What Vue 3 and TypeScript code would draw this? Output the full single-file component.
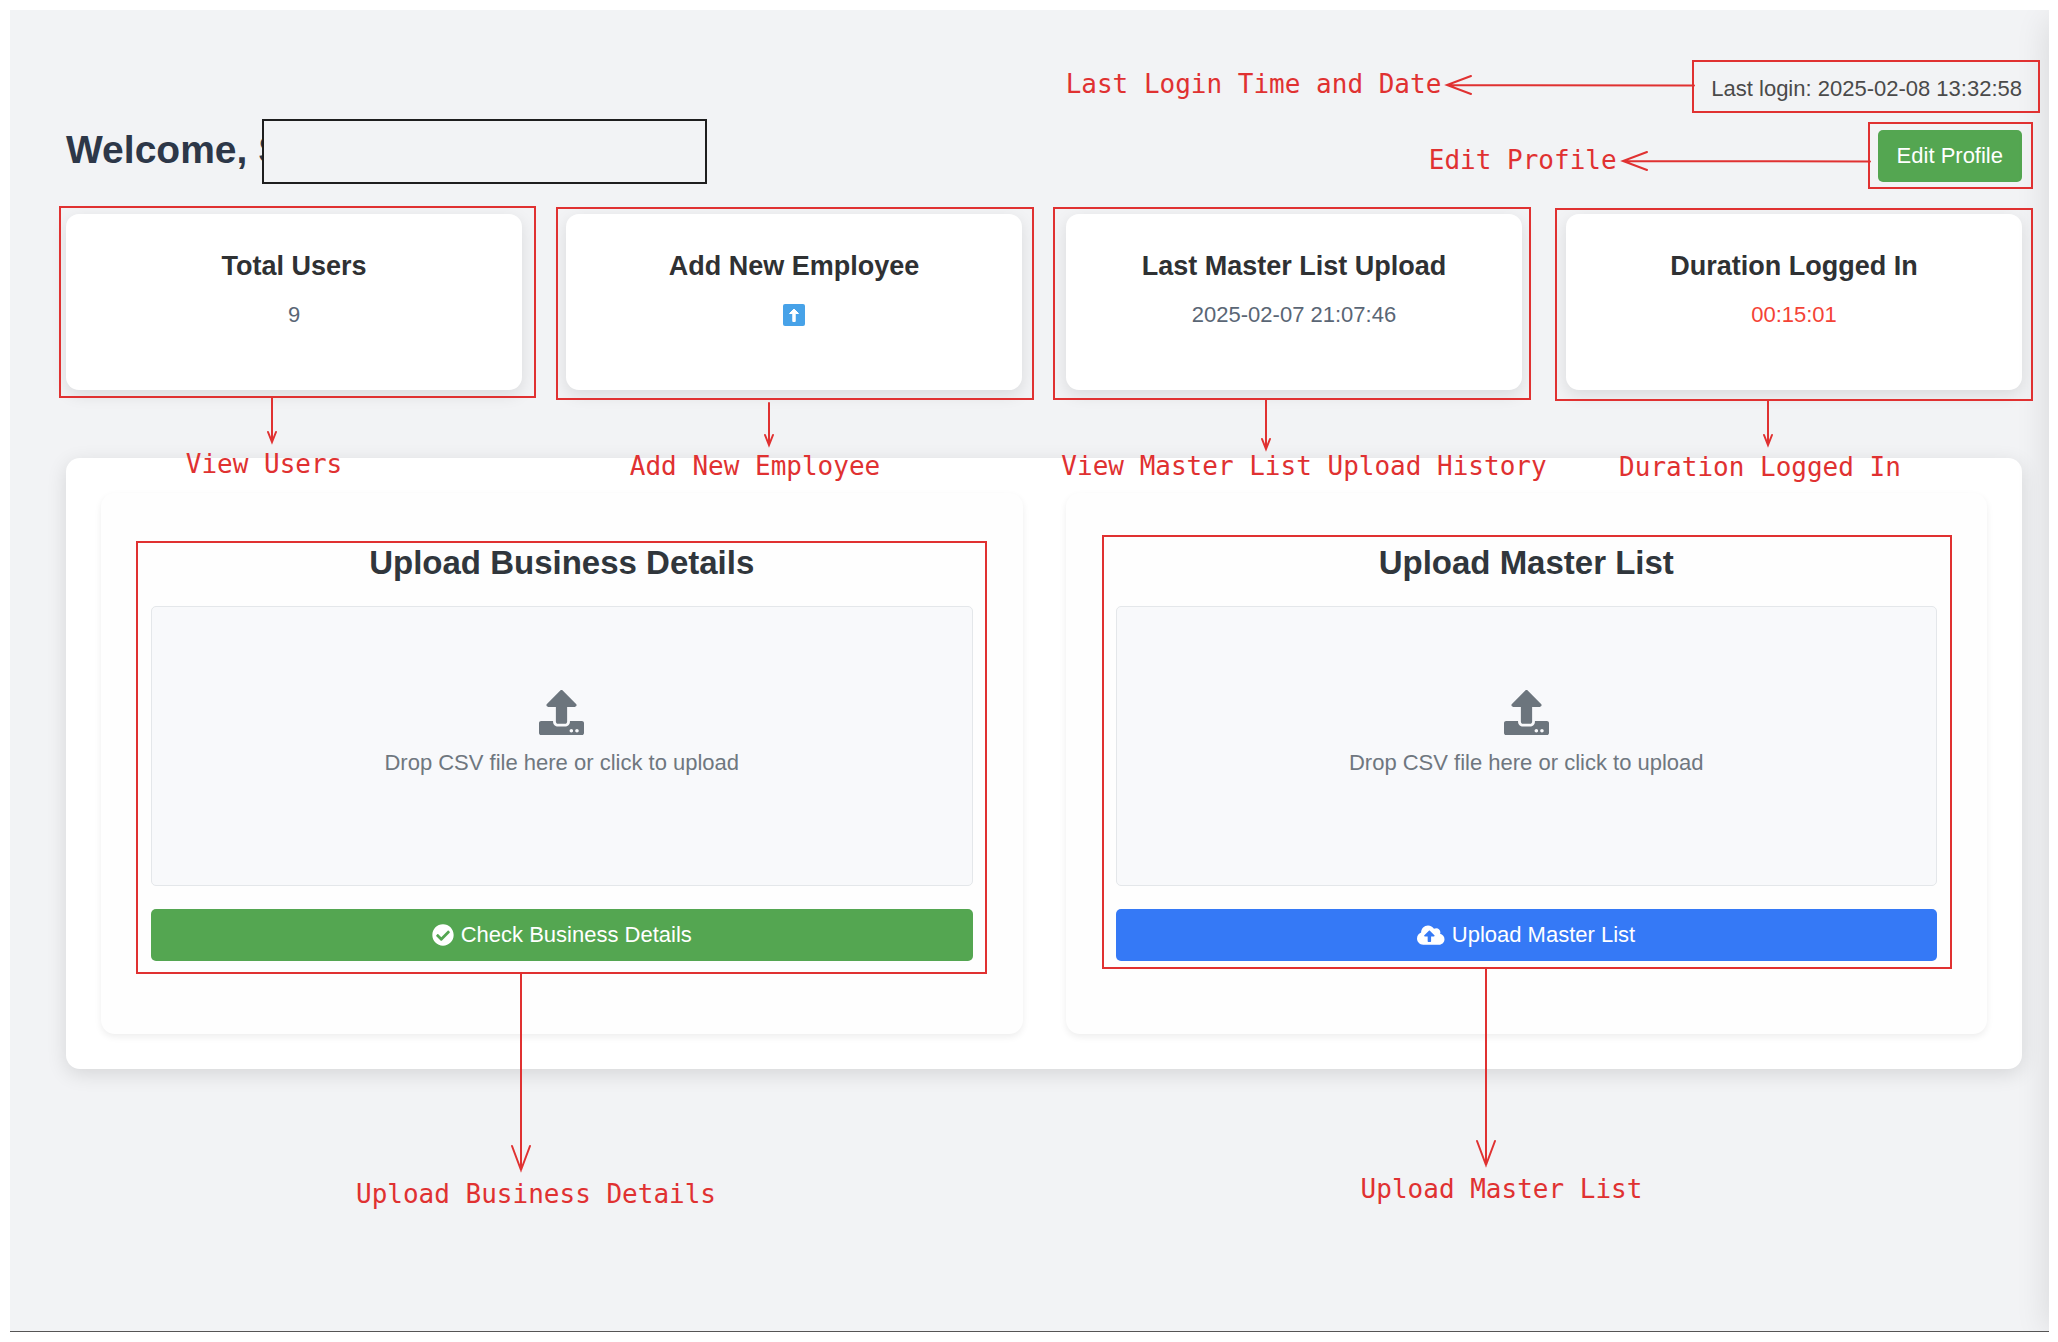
<script setup lang="ts">
interface Inset {
  top: number
  right: number
  bottom: number
  left: number
}

interface StatCard {
  title: string
  kind: 'text' | 'link' | 'timer'
  value: string
  frame: Inset
  note: string
  noteCenter: number
  arrowGap: number
  arrowLength: number
}

interface UploadCard {
  id: string
  title: string
  action: string
  tone: 'green' | 'blue'
  iconBox: string
  icon: string
  frame: Inset
  note: string
  noteCenter: number
}

const stats: StatCard[] = [
  {
    title: 'Total Users', kind: 'text', value: '9',
    frame: { top: -8, right: -14, bottom: -8, left: -7 },
    note: 'View Users', noteCenter: 203, arrowGap: 0, arrowLength: 45,
  },
  {
    title: 'Add New Employee', kind: 'link', value: '',
    frame: { top: -7, right: -12, bottom: -10, left: -10 },
    note: 'Add New Employee', noteCenter: 197, arrowGap: 4, arrowLength: 42,
  },
  {
    title: 'Last Master List Upload', kind: 'text', value: '2025-02-07 21:07:46',
    frame: { top: -7, right: -9, bottom: -10, left: -13 },
    note: 'View Master List Upload History', noteCenter: 249, arrowGap: 0, arrowLength: 50,
  },
  {
    title: 'Duration Logged In', kind: 'timer', value: '00:15:01',
    frame: { top: -6, right: -11, bottom: -11, left: -11 },
    note: 'Duration Logged In', noteCenter: 203, arrowGap: 0, arrowLength: 45,
  },
]

const uploads: UploadCard[] = [
  {
    id: 'business-file',
    title: 'Upload Business Details',
    action: 'Check Business Details',
    tone: 'green',
    iconBox: '0 0 512 512',
    icon: 'M504 256c0 136.967-111.033 248-248 248S8 392.967 8 256 119.033 8 256 8s248 111.033 248 248zM227.314 387.314l184-184c6.248-6.248 6.248-16.379 0-22.627l-22.627-22.627c-6.248-6.249-16.379-6.249-22.628 0L216 308.118l-70.059-70.059c-6.248-6.248-16.379-6.248-22.628 0l-22.627 22.627c-6.248 6.248-6.248 16.379 0 22.627l104 104c6.249 6.249 16.379 6.249 22.628.001z',
    frame: { top: 48, right: 36, bottom: 60, left: 35 },
    note: 'Upload Business Details',
    noteCenter: 398,
  },
  {
    id: 'master-file',
    title: 'Upload Master List',
    action: 'Upload Master List',
    tone: 'blue',
    iconBox: '0 0 640 512',
    icon: 'M537.6 226.6c4.1-10.7 6.4-22.4 6.4-34.6 0-53-43-96-96-96-19.7 0-38.1 6-53.3 16.2C367 64.2 315.3 32 256 32c-88.4 0-160 71.6-160 160 0 2.7.1 5.4.2 8.1C40.2 219.8 0 273.2 0 336c0 79.5 64.5 144 144 144h368c70.7 0 128-57.3 128-128 0-61.9-44-113.6-102.4-125.4zM393.4 288H328v112c0 8.8-7.2 16-16 16h-48c-8.8 0-16-7.2-16-16V288h-65.4c-14.3 0-21.4-17.2-11.3-27.4l105.4-105.4c6.2-6.2 16.4-6.2 22.6 0l105.4 105.4c10.1 10.2 2.9 27.4-11.3 27.4z',
    frame: { top: 42, right: 35, bottom: 65, left: 36 },
    note: 'Upload Master List',
    noteCenter: 398,
  },
]

function frameStyle(f: Inset) {
  return { inset: `${f.top}px ${f.right}px ${f.bottom}px ${f.left}px` }
}

// Shaft plus an open head; `w` is half the head's width and `h` its height.
function arrowDown(gap: number, length: number, w: number, h: number) {
  const tip = gap + length
  return `M10 ${gap}V${tip}M${10 - w} ${tip - h}L10 ${tip}L${10 + w} ${tip - h}`
}
</script>

<template>
  <main class="page">
    <header class="header">
      <h1 class="welcome">Welcome, S<span class="redaction"></span></h1>
      <div class="account">
        <div class="login annotated">
          Last login: 2025-02-08 13:32:58
          <div class="frame frame-login">
            <div class="side-note">
              <span class="note">Last Login Time and Date</span>
              <svg class="arrow-left" viewBox="0 0 245 20"><path d="M247 10.500L0 10M24 1L0 10L24 19" /></svg>
            </div>
          </div>
        </div>
        <div class="annotated">
          <button type="button" class="btn green edit">Edit Profile</button>
          <div class="frame frame-edit">
            <div class="side-note">
              <span class="note">Edit Profile</span>
              <svg class="arrow-left" viewBox="0 0 245 20"><path d="M247 10.500L0 10M24 1L0 10L24 19" /></svg>
            </div>
          </div>
        </div>
      </div>
    </header>

    <section class="stats">
      <article v-for="s in stats" :key="s.title" class="stat annotated">
        <h2 class="stat-title">{{ s.title }}</h2>
        <p class="stat-value" :class="{ timer: s.kind === 'timer' }">
          <a v-if="s.kind === 'link'" href="#" class="add" aria-label="Add new employee">
            <svg viewBox="0 0 22 22">
              <rect width="22" height="22" rx="2" fill="#47a2e8" />
              <path d="M11 5L15.500 9.500H12.200V17.500H9.800V9.500H6.500Z" fill="#fff" stroke="#fff" stroke-linejoin="round" />
            </svg>
          </a>
          <template v-else>{{ s.value }}</template>
        </p>
        <div class="frame" :style="frameStyle(s.frame)">
          <svg class="arrow-down"><path :d="arrowDown(s.arrowGap, s.arrowLength, 4, 10)" /></svg>
          <span class="note below" :style="{ left: `${s.noteCenter}px` }">{{ s.note }}</span>
        </div>
      </article>
    </section>

    <section class="panel">
      <form v-for="u in uploads" :key="u.id" class="upload annotated" @submit.prevent>
        <h2 class="upload-title">{{ u.title }}</h2>
        <label class="drop" :for="u.id">
          <svg class="drop-icon" viewBox="0 0 512 512">
            <path d="M296 384h-80c-13.300 0-24-10.700-24-24V192h-87.700c-17.800 0-26.700-21.500-14.100-34.100L242.300 5.700c7.500-7.500 19.800-7.500 27.300 0l152.200 152.200c12.600 12.600 3.700 34.100-14.100 34.100H320v168c0 13.300-10.700 24-24 24zm216-8v112c0 13.300-10.700 24-24 24H24c-13.300 0-24-10.700-24-24V376c0-13.300 10.700-24 24-24h136v8c0 30.900 25.100 56 56 56h80c30.900 0 56-25.100 56-56v-8h136c13.300 0 24 10.700 24 24zm-124 88c0-11-9-20-20-20s-20 9-20 20 9 20 20 20 20-9 20-20zm64 0c0-11-9-20-20-20s-20 9-20 20 9 20 20 20 20-9 20-20z" />
          </svg>
          <span class="drop-text">Drop CSV file here or click to upload</span>
          <input :id="u.id" class="file" type="file" accept=".csv" />
        </label>
        <button type="submit" class="btn wide" :class="u.tone">
          <svg class="btn-icon" :viewBox="u.iconBox"><path :d="u.icon" /></svg>
          {{ u.action }}
        </button>
        <div class="frame" :style="frameStyle(u.frame)">
          <svg class="arrow-down"><path :d="arrowDown(0, 197, 9, 24)" /></svg>
          <span class="note far" :style="{ left: `${u.noteCenter}px` }">{{ u.note }}</span>
        </div>
      </form>
    </section>
  </main>
</template>

<style>
body {
  background: #fff;
}
</style>

<style scoped>
.page {
  position: relative;
  box-sizing: border-box;
  min-height: calc(100vh - 20px);
  margin: 10px 9px 10px 10px;
  padding: 62px 27px 40px 56px;
  overflow: hidden;
  background: #f2f3f5;
  border-bottom: 1px solid #555;
  font-family: "Liberation Sans", Arial, sans-serif;
  font-size: 22px;
  line-height: 32px;
}

/* Shadow cast by the window's right edge */
.page::after {
  content: "";
  position: absolute;
  top: 10px;
  bottom: 0;
  left: 100%;
  width: 40px;
  box-shadow: 0 0 34px rgba(0, 0, 0, 0.12);
}

h1,
h2,
p {
  margin: 0;
}

.header {
  display: flex;
  justify-content: space-between;
  align-items: flex-end;
  margin-bottom: 32px;
}

.welcome {
  position: relative;
  color: #2d3748;
  font-size: 39px;
  line-height: 64px;
}

.redaction {
  position: absolute;
  top: 1px;
  left: 196px;
  box-sizing: border-box;
  width: 445px;
  height: 65px;
  background: #f2f3f5;
  border: 2px solid #1e1e1e;
}

.account {
  display: flex;
  flex-direction: column;
  align-items: flex-end;
  gap: 24px;
}

.login {
  color: #4a4a4a;
  line-height: 34px;
}

.annotated {
  position: relative;
}

.btn {
  display: flex;
  align-items: center;
  justify-content: center;
  gap: 7px;
  height: 52px;
  padding: 0 19px;
  border: 0;
  border-radius: 5px;
  color: #fff;
  font: inherit;
  cursor: pointer;
}

.green {
  background: #54a651;
}

.blue {
  background: #3579f6;
}

.wide {
  width: 100%;
}

.btn-icon {
  height: 22px;
  fill: currentColor;
}

.stats {
  display: grid;
  grid-template-columns: repeat(4, 1fr);
  gap: 44px;
  margin-bottom: 68px;
}

.stat {
  box-sizing: border-box;
  min-height: 176px;
  padding: 36px 20px;
  background: #fff;
  border-radius: 13px;
  box-shadow: 0 5px 16px rgba(0, 0, 0, 0.1);
  text-align: center;
}

.stat-title {
  margin-bottom: 17px;
  color: #2f3133;
  font-size: 27px;
  line-height: 32px;
}

.stat-value {
  color: #5a6675;
}

.timer {
  color: #f44336;
}

.add {
  display: flex;
  justify-content: center;
  align-items: center;
  height: 32px;
}

.add svg {
  width: 22px;
  height: 22px;
}

.panel {
  display: grid;
  grid-template-columns: 1fr 1fr;
  gap: 43px;
  padding: 35px;
  background: #fff;
  border-radius: 14px;
  box-shadow: 0 5px 20px rgba(0, 0, 0, 0.12);
}

.upload {
  padding: 50px 50px 73px;
  background: #fefefe;
  border-radius: 14px;
  box-shadow: 0 3px 7px rgba(0, 0, 0, 0.07);
}

.upload-title {
  margin-bottom: 23px;
  color: #30363c;
  font-size: 33px;
  line-height: 40px;
  text-align: center;
}

.drop {
  position: relative;
  box-sizing: border-box;
  display: flex;
  flex-direction: column;
  align-items: center;
  justify-content: center;
  gap: 12px;
  height: 280px;
  margin-bottom: 23px;
  background: #f8f9fb;
  border: 1px solid #e4e7ea;
  border-radius: 5px;
  color: #6f777f;
  cursor: pointer;
}

.drop-icon {
  width: 45px;
  height: 45px;
  fill: #6c757d;
}

.drop-text {
  margin-bottom: 23px;
}

.file {
  position: absolute;
  inset: 0;
  width: 100%;
  opacity: 0;
  cursor: pointer;
}

/* Annotation layer: frames, arrows and notes drawn over the page */
.frame {
  position: absolute;
  z-index: 1;
  border: 2px solid #e03131;
  pointer-events: none;
}

.frame-login {
  inset: -12px -18px -7px -19px;
}

.frame-edit {
  inset: -8px -11px -7px -10px;
}

.note {
  color: #e03131;
  font-family: "DejaVu Sans Mono", monospace;
  font-size: 26px;
  line-height: 32px;
  white-space: nowrap;
}

.below,
.far {
  position: absolute;
  transform: translateX(-50%);
}

.below {
  top: calc(100% + 52px);
}

.far {
  top: calc(100% + 206px);
}

.arrow-down,
.arrow-left {
  overflow: visible;
  fill: none;
  stroke: #e03131;
  stroke-width: 2;
  stroke-linecap: round;
}

.arrow-down {
  position: absolute;
  top: calc(100% + 1px);
  width: 20px;
  height: 50px;
}

.stat .arrow-down {
  left: calc(45% - 12px);
}

.upload .arrow-down {
  left: calc(45% - 8px);
}

.arrow-left {
  flex: none;
  width: 245px;
  height: 20px;
  margin-top: 2px;
}

.side-note {
  position: absolute;
  top: 6px;
  right: 100%;
  display: flex;
  align-items: center;
  gap: 6px;
  margin-right: 2px;
}

.frame-edit .side-note {
  top: 20px;
}
</style>
